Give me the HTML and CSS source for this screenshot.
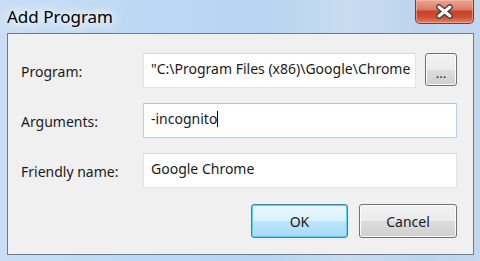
FILE: index.html
```html
<!DOCTYPE html>
<html lang="en">
<head>
    <meta charset="UTF-8">
    <title>Add Program</title>
    <link rel="stylesheet" href="styles.css">
</head>
<body>
    <div class="window">
        <div class="titlebar">
            <span class="title">Add Program</span>
            <button class="close" title="Close">
                <svg width="19" height="15" viewBox="0 0 19 15">
                    <path d="M4 3 L15 12 M15 3 L4 12" stroke="#3b3b3b" stroke-width="5.5" stroke-linecap="round"/>
                    <path d="M4 3 L15 12 M15 3 L4 12" stroke="#ffffff" stroke-width="3" stroke-linecap="round"/>
                </svg>
            </button>
        </div>

        <div class="client">
            <div class="fields">
                <label class="label">Program:</label>
                <div class="field-row">
                    <div class="textbox">"C:\Program Files (x86)\Google\Chrome</div>
                    <button class="btn browse">...</button>
                </div>

                <label class="label">Arguments:</label>
                <div class="textbox focused">-incognito<span class="caret"></span></div>

                <label class="label">Friendly name:</label>
                <div class="textbox">Google Chrome</div>
            </div>

            <div class="actions">
                <button class="btn default">OK</button>
                <button class="btn">Cancel</button>
            </div>
        </div>
    </div>
</body>
</html>
```

FILE: styles.css
```css
body {
    margin: 0;
    font-family: "Noto Sans", "Open Sans", sans-serif;
    font-size: 14px;
    color: #1a1a1a;
}
.window {
    width: 480px;
    height: 261px;
    box-sizing: border-box;
    background: linear-gradient(90deg, #c9def4 0%, #bcd8f4 30%, #b7d4f1 55%, #c8dcef 72%, #bcd4ec 88%, #c3d8ee 100%);
    display: flex;
    flex-direction: column;
    overflow: hidden;
}
.titlebar {
    height: 33px;
    display: flex;
    justify-content: space-between;
    align-items: flex-start;
    padding: 0 6px 0 7px;
    flex-shrink: 0;
}
.title {
    margin-top: 6px;
    font-size: 17px;
    line-height: 22px;
    color: #000;
    text-shadow: 0 0 8px #fff, 0 0 14px #fff, 0 0 18px #fff;
}
.close {
    width: 59px;
    height: 24px;
    border: 1px solid #7a3a2c;
    border-top: none;
    border-radius: 0 0 5px 5px;
    background: linear-gradient(#e9a594 0%, #dc7d66 40%, #c7432b 50%, #cf4f35 75%, #e08468 100%);
    box-shadow: inset 0 0 0 1px rgba(255, 200, 185, 0.5);
    display: flex;
    align-items: center;
    justify-content: center;
    padding: 0;
}
.client {
    flex: 1;
    margin: 0 6px 6px 7px;
    background: #f0f0f0;
    border: 1px solid #6b7a8c;
    padding: 19px 16px 0 13px;
}
.fields {
    display: grid;
    grid-template-columns: 122px minmax(0, 1fr);
    grid-auto-rows: 35px;
    row-gap: 15px;
    align-items: center;
}
.label {
    line-height: 20px;
    padding-top: 3px;
}
.field-row {
    display: flex;
    gap: 9px;
    height: 100%;
    min-width: 0;
}
.textbox {
    height: 35px;
    box-sizing: border-box;
    background: #fff;
    border: 1px solid #e3e3e6;
    border-top-color: #d6d7da;
    padding: 5px 7px 0;
    line-height: 20px;
    white-space: nowrap;
    overflow: hidden;
    flex: 1;
    min-width: 0;
}
.textbox.focused {
    border-color: #b6d0ea;
    border-top-color: #a9c6e4;
}
.caret {
    display: inline-block;
    width: 1px;
    height: 16px;
    background: #000;
    vertical-align: -3px;
}
.btn {
    font-family: inherit;
    font-size: 14px;
    color: #1a1a1a;
    border: 1px solid #707070;
    border-radius: 3px;
    background: linear-gradient(#f2f2f2 0%, #ebebeb 50%, #dddddd 51%, #cfcfcf 100%);
    box-shadow: inset 0 0 0 1px #fcfcfc;
    padding: 0;
}
.browse {
    width: 32px;
    height: 33px;
    padding-top: 6px;
    font-size: 13px;
    flex-shrink: 0;
}
.actions {
    display: flex;
    justify-content: flex-end;
    gap: 11px;
    margin-top: 16px;
}
.actions .btn {
    width: 98px;
    height: 34px;
}
.btn.default {
    width: 97px;
    border-color: #3c7fb1;
    background: linear-gradient(#eaf6fd 0%, #d9f0fc 50%, #bee6fd 51%, #a7d9f5 100%);
    box-shadow: inset 0 0 0 1px #5ed0f5;
}
```
